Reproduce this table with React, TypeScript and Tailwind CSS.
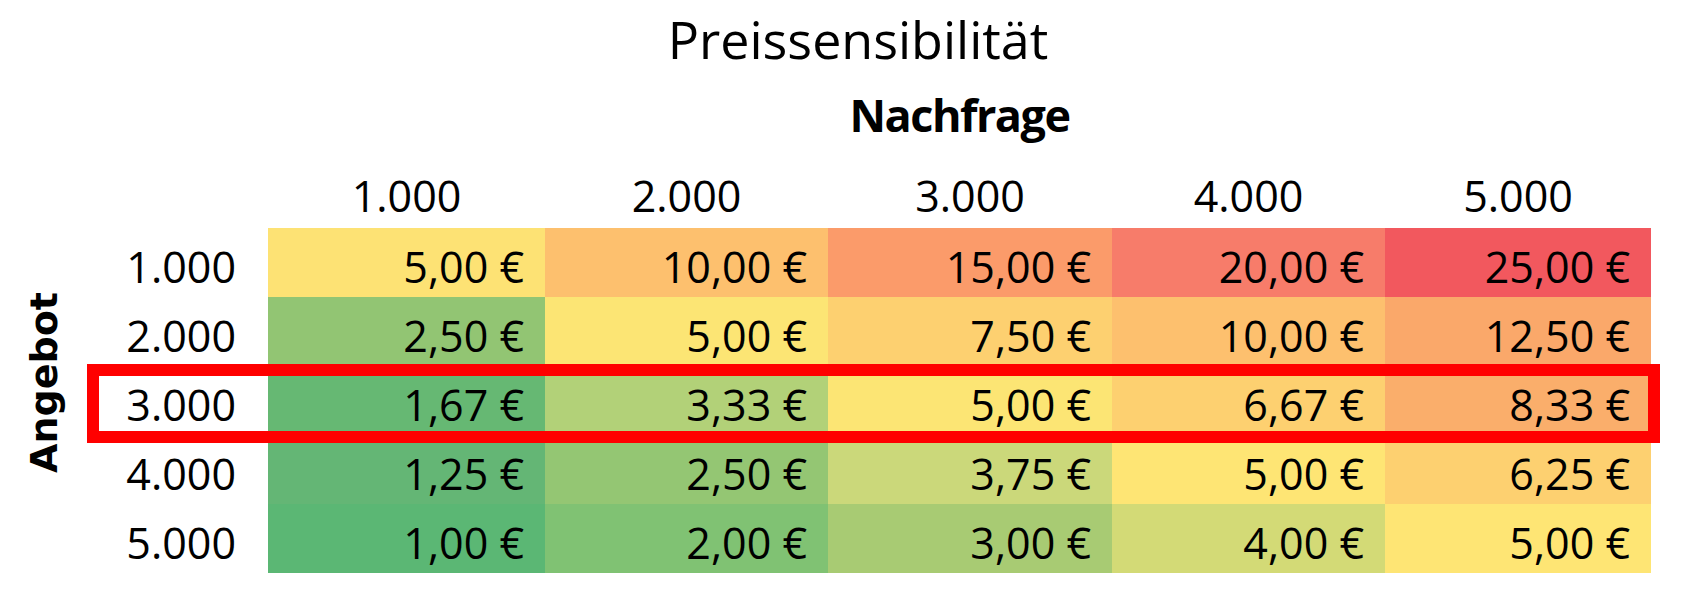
import React from 'react';

const colWidths = ['w-[277px]', 'w-[283px]', 'w-[284px]', 'w-[273px]', 'w-[266px]'];

const headers = ['1.000', '2.000', '3.000', '4.000', '5.000'];

const rows: { label: string; cells: { value: string; bg: string }[] }[] = [
  {
    label: '1.000',
    cells: [
      { value: '5,00 €', bg: 'bg-[#fde274]' },
      { value: '10,00 €', bg: 'bg-[#fdc06e]' },
      { value: '15,00 €', bg: 'bg-[#fb9b6a]' },
      { value: '20,00 €', bg: 'bg-[#f77c6a]' },
      { value: '25,00 €', bg: 'bg-[#f2585e]' },
    ],
  },
  {
    label: '2.000',
    cells: [
      { value: '2,50 €', bg: 'bg-[#92c573]' },
      { value: '5,00 €', bg: 'bg-[#fce574]' },
      { value: '7,50 €', bg: 'bg-[#fdd070]' },
      { value: '10,00 €', bg: 'bg-[#fdc06e]' },
      { value: '12,50 €', bg: 'bg-[#faa86a]' },
    ],
  },
  {
    label: '3.000',
    cells: [
      { value: '1,67 €', bg: 'bg-[#66b873]' },
      { value: '3,33 €', bg: 'bg-[#b2d178]' },
      { value: '5,00 €', bg: 'bg-[#fce574]' },
      { value: '6,67 €', bg: 'bg-[#fdd070]' },
      { value: '8,33 €', bg: 'bg-[#faae6b]' },
    ],
  },
  {
    label: '4.000',
    cells: [
      { value: '1,25 €', bg: 'bg-[#64b675]' },
      { value: '2,50 €', bg: 'bg-[#94c673]' },
      { value: '3,75 €', bg: 'bg-[#cbd87a]' },
      { value: '5,00 €', bg: 'bg-[#fee574]' },
      { value: '6,25 €', bg: 'bg-[#fdd070]' },
    ],
  },
  {
    label: '5.000',
    cells: [
      { value: '1,00 €', bg: 'bg-[#5bb774]' },
      { value: '2,00 €', bg: 'bg-[#80c273]' },
      { value: '3,00 €', bg: 'bg-[#a8cb73]' },
      { value: '4,00 €', bg: 'bg-[#d3da76]' },
      { value: '5,00 €', bg: 'bg-[#fee574]' },
    ],
  },
];

export default function App() {
  return (
    <div className="relative h-[608px] w-[1699px] overflow-hidden bg-white text-black font-['Open_Sans',sans-serif]">
      <div className="pt-[9px] pl-[17px] text-center text-[52px] leading-[60px]">Preissensibilität</div>

      <div className="mt-[23px] ml-[268px] w-[1383px] text-center text-[45px] font-bold leading-none tracking-[-1.5px]">
        Nachfrage
      </div>

      <div className="mt-[37px] ml-[268px] flex text-[43px] font-medium leading-none">
        {headers.map((h, i) => (
          <div key={h} className={`${colWidths[i]} text-center`}>
            {h}
          </div>
        ))}
      </div>

      <div className="mt-[11px] flex">
        <div className="flex w-[87px] items-center justify-center pb-[36px]">
          <span className="rotate-180 text-[38px] font-bold leading-none [writing-mode:vertical-rl] font-['DejaVu_Sans',sans-serif]">
            Angebot
          </span>
        </div>
        <div>
          {rows.map((row) => (
            <div key={row.label} className="flex h-[69px] text-[43px] font-medium leading-none">
              <div className="w-[181px] pt-[17px] pr-[32px] text-right">{row.label}</div>
              {row.cells.map((c, i) => (
                <div key={i} className={`${colWidths[i]} ${c.bg} pt-[17px] pr-[21px] text-right`}>
                  {c.value}
                </div>
              ))}
            </div>
          ))}
        </div>
      </div>

      {/* highlight around the 3.000 row */}
      <div className="absolute top-[364px] left-[87px] h-[79px] w-[1573px] border-[12px] border-[#ff0000]" />
    </div>
  );
}
